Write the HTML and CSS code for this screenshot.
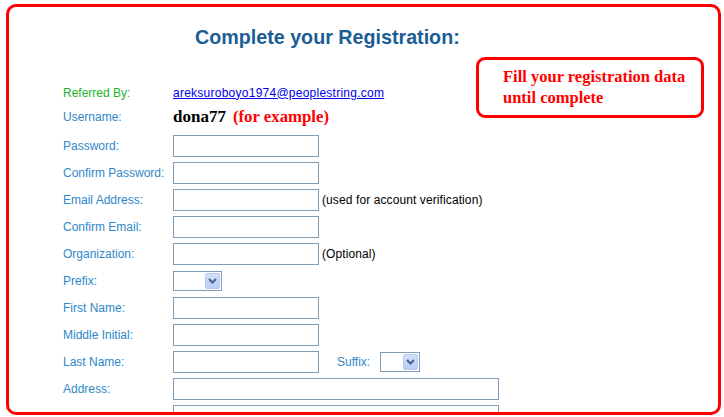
FILE: index.html
```html
<!DOCTYPE html>
<html>
	<head>
		<meta charset="utf-8">
		<title>Complete your Registration</title>
		<link rel="stylesheet" href="styles.css">
	</head>
	<body>
		<div class="frame">
			<h2 class="title">Complete your Registration:</h2>

			<!-- 提示框 -->
			<div class="note">Fill your registration data<br>until complete</div>

			<div class="form">
				<div class="row row-ref">
					<span class="lbl green">Referred By:</span>
					<a href="#" class="ref">areksuroboyo1974@peoplestring.com</a>
				</div>
				<div class="row row-user">
					<span class="lbl">Username:</span>
					<span class="uname">dona77</span><span class="example">(for example)</span>
				</div>
				<div class="row">
					<span class="lbl">Password:</span>
					<span class="inp"></span>
				</div>
				<div class="row">
					<span class="lbl">Confirm Password:</span>
					<span class="inp"></span>
				</div>
				<div class="row">
					<span class="lbl">Email Address:</span>
					<span class="inp"></span>
					<span class="hint">(used for account verification)</span>
				</div>
				<div class="row">
					<span class="lbl">Confirm Email:</span>
					<span class="inp"></span>
				</div>
				<div class="row">
					<span class="lbl">Organization:</span>
					<span class="inp"></span>
					<span class="hint">(Optional)</span>
				</div>
				<div class="row">
					<span class="lbl">Prefix:</span>
					<span class="sel sel-prefix">
						<span class="btn"><svg width="9" height="6" viewBox="0 0 9 6"><path d="M1 1l3.5 3.5L8 1" fill="none" stroke="#4d6185" stroke-width="2"/></svg></span>
					</span>
				</div>
				<div class="row">
					<span class="lbl">First Name:</span>
					<span class="inp"></span>
				</div>
				<div class="row">
					<span class="lbl">Middle Initial:</span>
					<span class="inp"></span>
				</div>
				<div class="row">
					<span class="lbl">Last Name:</span>
					<span class="inp"></span>
					<span class="lbl suffix">Suffix:</span>
					<span class="sel sel-suffix">
						<span class="btn"><svg width="9" height="6" viewBox="0 0 9 6"><path d="M1 1l3.5 3.5L8 1" fill="none" stroke="#4d6185" stroke-width="2"/></svg></span>
					</span>
				</div>
				<div class="row">
					<span class="lbl">Address:</span>
					<span class="inp wide"></span>
				</div>
				<div class="row">
					<span class="lbl"></span>
					<span class="inp wide"></span>
				</div>
			</div>
		</div>
	</body>
</html>
```

FILE: styles.css
```css
* {
	margin: 0;
	padding: 0;
	box-sizing: border-box;
}
body {
	background: #fff;
	font-family: "Liberation Sans", Arial, sans-serif;
	font-size: 12px;
}
.frame {
	position: relative;
	width: 715px;
	height: 411px;
	margin: 4px 0 0 6px;
	border: 3px solid #f00;
	border-radius: 10px;
	overflow: hidden;
}
.title {
	margin-top: 18px;
	padding-left: 186px;
	font-size: 19.7px;
	line-height: 24px;
	font-weight: bold;
	color: #1b5e95;
}
.note {
	position: absolute;
	left: 467px;
	top: 50px;
	width: 228px;
	height: 61px;
	border: 3px solid #f00;
	border-radius: 9px;
	padding: 6px 0 0 24px;
	font-family: "Liberation Serif", "Times New Roman", serif;
	font-weight: bold;
	font-size: 16.5px;
	line-height: 21px;
	color: #f00;
	white-space: nowrap;
}
.form {
	margin: 35px 0 0 54px;
}
.row {
	display: flex;
	align-items: center;
	height: 27px;
}
.row-ref {
	height: 17px;
}
.row-user {
	height: 31px;
}
.lbl {
	width: 110px;
	flex: none;
	color: #2e87c9;
	white-space: nowrap;
}
.green {
	color: #20b52a;
}
.ref {
	color: #0000ee;
	text-decoration: underline;
	letter-spacing: 0.25px;
}
.uname {
	font-family: "Liberation Serif", "Times New Roman", serif;
	font-weight: bold;
	font-size: 17px;
	color: #000;
}
.example {
	margin-left: 7px;
	font-family: "Liberation Serif", "Times New Roman", serif;
	font-weight: bold;
	font-size: 16.8px;
	color: #f00;
}
.inp {
	display: block;
	width: 146px;
	height: 22px;
	border: 1px solid #7f9db9;
	background: #fff;
}
.inp.wide {
	width: 326px;
}
.hint {
	margin-left: 3px;
	color: #000;
	letter-spacing: 0.1px;
}
.sel {
	position: relative;
	display: block;
	height: 20px;
	border: 1px solid #7f9db9;
	background: #fff;
}
.sel-prefix {
	width: 49px;
}
.sel-suffix {
	width: 40px;
}
.btn {
	position: absolute;
	right: 1px;
	top: 1px;
	width: 15px;
	height: 16px;
	border: 1px solid #b7c9f3;
	border-radius: 2px;
	background: linear-gradient(#d3e0fd, #b9cdf9);
	display: flex;
	align-items: center;
	justify-content: center;
}
.suffix {
	width: auto;
	margin: 0 10px 0 18px;
}
```
